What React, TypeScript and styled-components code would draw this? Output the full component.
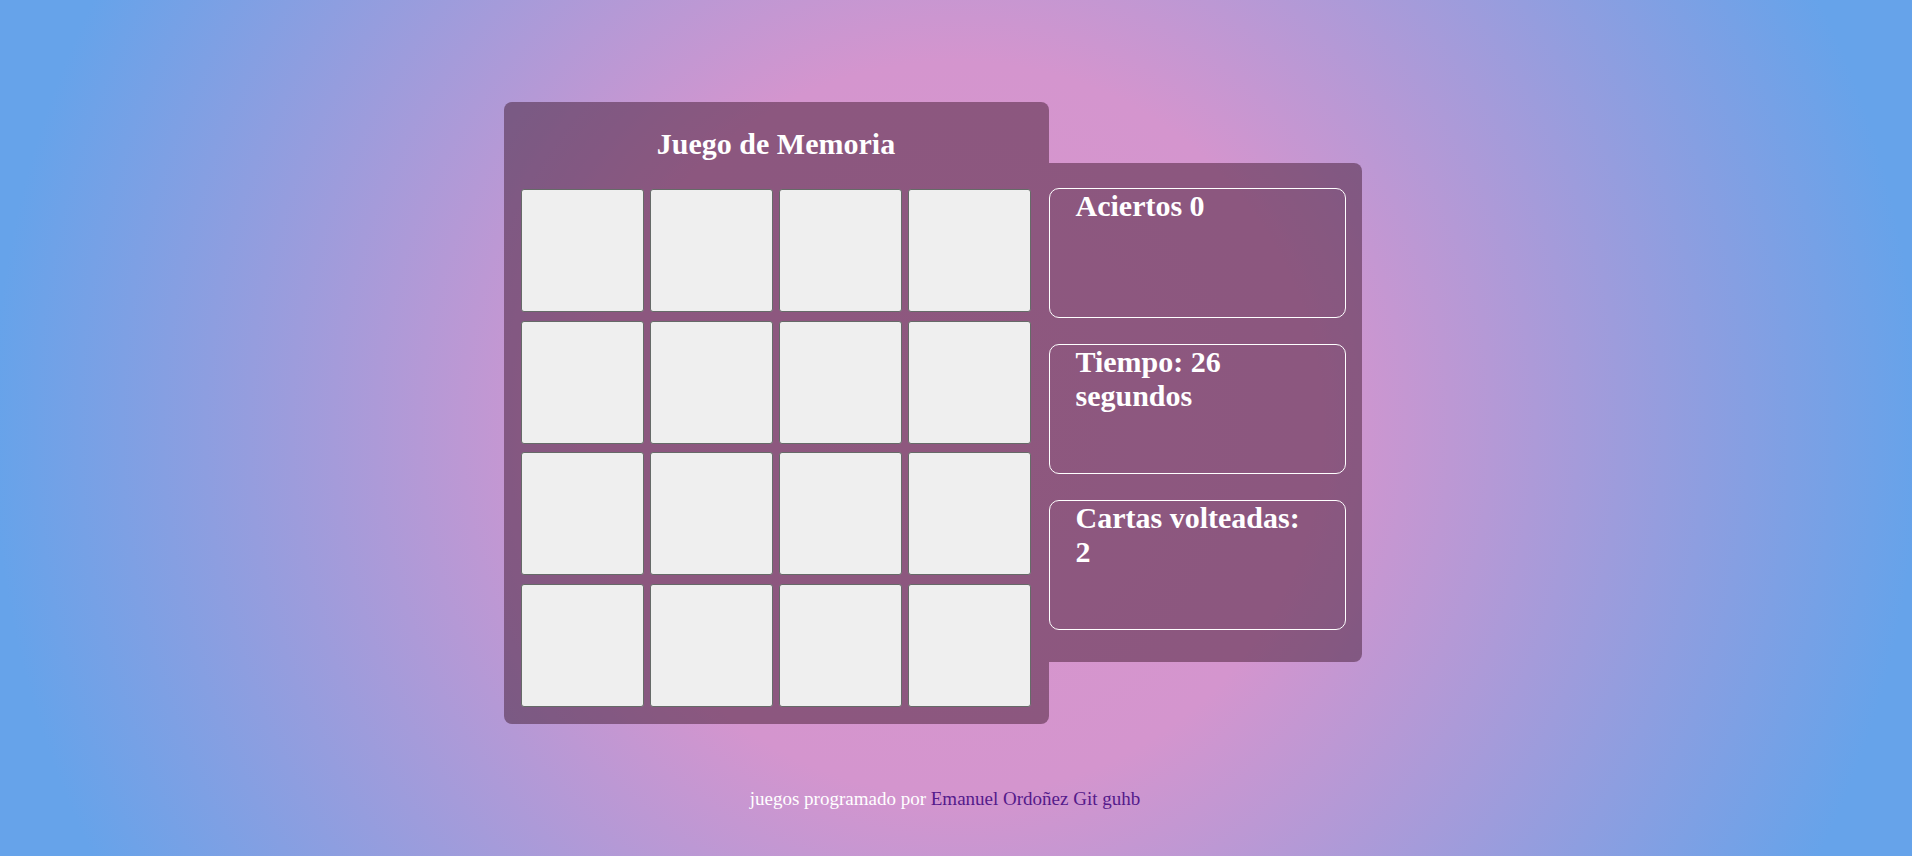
import { createGlobalStyle, styled } from 'styled-components';

const GlobalStyle = createGlobalStyle`
  html,
  body {
    margin: 0;
    min-height: 100%;
  }

  body {
    min-height: 100vh;
    font-family: 'Liberation Serif', 'Times New Roman', serif;
    background: radial-gradient(
      circle at 50% 50%,
      #d996cc 0%,
      #d495ce 35%,
      #66a3ea 92%,
      #66a3ea 100%
    );
    background-attachment: fixed;
  }
`;

const Page = styled.div`
  display: flex;
  flex-direction: column;
  align-items: center;
  min-height: 100vh;
`;

const GameRow = styled.main`
  display: flex;
  align-items: center;
  margin-top: 102px;
  padding-right: 47px;
`;

const Board = styled.section`
  width: 545px;
  box-sizing: border-box;
  padding: 0 17px 17px;
  border-radius: 8px;
  background: rgba(55, 15, 35, 0.46);
`;

const Title = styled.h1`
  margin: 25px 0 28px;
  font-size: 30px;
  font-weight: bold;
  color: #ffffff;
  text-align: center;
`;

const Grid = styled.div`
  display: grid;
  grid-template-columns: repeat(4, 123px);
  grid-auto-rows: 123px;
  column-gap: 6.3px;
  row-gap: 8.6px;
`;

const Card = styled.div<{ $flipped?: boolean }>`
  box-sizing: border-box;
  border: 1px solid #666a68;
  border-radius: 3px;
  background: ${(p) => (p.$flipped ? '#ffffff' : '#efefef')};
`;

const Stats = styled.aside`
  display: flex;
  flex-direction: column;
  gap: 26px;
  width: 313px;
  box-sizing: border-box;
  padding: 25px 16px 32px 0;
  border-radius: 0 8px 8px 0;
  background: rgba(55, 15, 35, 0.46);
`;

const StatBox = styled.div`
  box-sizing: border-box;
  height: 130px;
  padding: 0 40px 0 26px;
  border: 1px solid #ffffff;
  border-radius: 10px;
`;

const StatText = styled.h2`
  margin: 0;
  font-size: 30px;
  font-weight: bold;
  color: #ffffff;
`;

const Footer = styled.footer`
  margin-top: 64px;
  padding-right: 22px;
  font-size: 19px;
  color: #ffffff;
`;

const Link = styled.a`
  color: #551a8b;
  text-decoration: none;
`;

export default function App() {
  const cards = Array.from({ length: 16 }, (_, i) => i);

  return (
    <>
      <GlobalStyle />
      <Page>
        <GameRow>
          <Board>
            <Title>Juego de Memoria</Title>
            <Grid>
              {cards.map((c) => (
                <Card key={c} />
              ))}
            </Grid>
          </Board>
          <Stats>
            <StatBox>
              <StatText>Aciertos 0</StatText>
            </StatBox>
            <StatBox>
              <StatText>Tiempo: 26 segundos</StatText>
            </StatBox>
            <StatBox>
              <StatText>Cartas volteadas: 2</StatText>
            </StatBox>
          </Stats>
        </GameRow>
        <Footer>
          juegos programado por <Link href="#">Emanuel Ordoñez Git guhb</Link>
        </Footer>
      </Page>
    </>
  );
}
